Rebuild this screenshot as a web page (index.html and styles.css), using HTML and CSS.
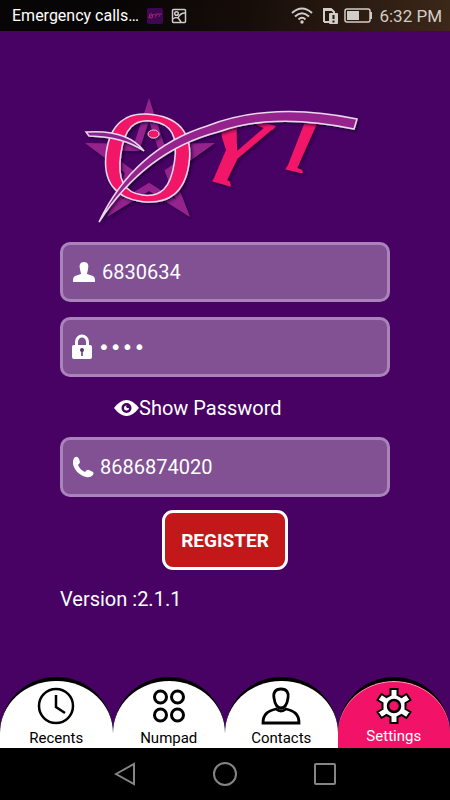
FILE: index.html
```html
<!DOCTYPE html>
<html lang="en">
  <head>
    <meta charset="utf-8">
    <meta name="viewport" content="width=device-width, initial-scale=1">
    <title>OYT Settings</title>
    <link rel="stylesheet" href="styles.css">
  </head>
  <body>
    <header class="status-bar">
      <span class="carrier">Emergency calls…</span>
      <svg class="app-badge" width="16" height="16" viewBox="0 0 16 16">
        <rect width="16" height="16" rx="2" fill="#3d0752"/>
        <ellipse cx="4" cy="8" rx="1.7" ry="2.2" fill="none" stroke="#b0256f"/>
        <path d="M1 10Q6 5 15 6M8 6.500l1 1.500 2-2M9 8l-1 2M13 6l-1 3" fill="none" stroke="#9c2672" stroke-width=".8"/>
      </svg>
      <svg width="16" height="16" viewBox="0 0 16 16" fill="none" stroke="#cfccca" stroke-width="1.500">
        <rect x="1.500" y="1.500" width="13" height="13" rx="1"/>
        <circle cx="5.500" cy="5.500" r="1.800"/>
        <path d="M2 11q3-3 6 0l2 3M7 10q2-5 7-5"/>
      </svg>
      <div class="status-right">
        <svg width="22" height="17" viewBox="0 0 22 17" fill="none" stroke="#d3cdc8" stroke-width="2">
          <path d="M1 6Q11-3 21 6M4 9.500Q11 3 18 9.500M7.500 12.500Q11 9 14.500 12.500"/>
          <circle cx="11" cy="15" r="1.700" fill="#d3cdc8" stroke="none"/>
        </svg>
        <svg width="15" height="17" viewBox="0 0 15 17">
          <path d="M1 15V2h7l3 3v2M1 15h6" fill="none" stroke="#d3cdc8" stroke-width="2"/>
          <path d="M1 1h7l3 3H1z" fill="#d3cdc8"/>
          <rect x="6" y="6" width="9" height="11" rx="1" fill="#d3cdc8"/>
          <path d="M10.500 8v4M10.500 13.500v2" stroke="#211710" stroke-width="2"/>
        </svg>
        <svg width="29" height="15" viewBox="0 0 29 15">
          <rect x="1" y="1" width="25" height="13" rx="2" fill="none" stroke="#d3cdc8" stroke-width="1.500"/>
          <rect x="3" y="3" width="12" height="9" fill="#d3cdc8"/>
          <path d="M27 4v7" stroke="#d3cdc8" stroke-width="2"/>
        </svg>
        <span class="time">6:32 PM</span>
      </div>
    </header>

    <main class="content">
      <svg class="logo" width="290" height="140" viewBox="80 90 290 140" role="img" aria-label="OYT">
        <defs>
          <clipPath id="star-clip">
            <path d="M149 98l15 46 51-1-42 30 17 44-41-26-42 26 18-44-40-30 49 1z"/>
          </clipPath>
          <!-- the swoosh is the top of both letters, so they start below it -->
          <clipPath id="y-clip">
            <path d="M219 128L278 117V124L250 154 230 182 231 187 209 187 214 178 226 150z"/>
          </clipPath>
          <clipPath id="t-clip">
            <path d="M306 119H324L301 166 303 173 283 173 288 165z"/>
          </clipPath>
          <filter id="shadow" x="-20%" y="-20%" width="150%" height="150%">
            <feDropShadow dx="2" dy="2" stdDeviation="1.500" flood-color="#1c0030" flood-opacity=".7"/>
          </filter>
        </defs>
        <g filter="url(#shadow)">
          <path clip-path="url(#star-clip)" d="M149 98l15 46 51-1-42 30 17 44-41-26-42 26 18-44-40-30 49 1z" fill="none" stroke="#96248d" stroke-width="14"/>
        </g>
        <g filter="url(#shadow)">
          <g clip-path="url(#y-clip)">
            <text class="logo-letter" x="0" y="0" font-size="108" transform="translate(190 175) rotate(16)">Y</text>
          </g>
          <g clip-path="url(#t-clip)">
            <text class="logo-letter" x="0" y="0" font-size="86" transform="translate(268 165) rotate(14)">T</text>
          </g>
        </g>
        <g filter="url(#shadow)">
          <text class="logo-letter logo-o" x="0" y="0" font-size="128" transform="translate(96 193) rotate(8)">O</text>
          <ellipse cx="153.500" cy="134" rx="5.500" ry="4" fill="#f21368" stroke="#e6d5ea"/>
          <path d="M86 132Q127 129 144 151Q124 137 89 136z" fill="#8c2492" stroke="#ead9ed" stroke-width="1.500"/>
          <path d="M99 222Q134 149 207 126Q271 101 357 119L354 129Q273 112 218 132Q145 151 99 222z" fill="#96248d" stroke="#ead9ed" stroke-width="1.500"/>
        </g>
      </svg>

      <form class="register-form">
        <label class="field">
          <svg width="24" height="22" viewBox="0 0 24 22" fill="#fff">
            <path d="M12 1c4 0 5 3 4 7 0 2-1 3-1 5l6 2c2 1 2 3 2 6H1c0-3 0-5 2-6l6-2c0-2-1-3-1-5-1-4 0-7 4-7z"/>
          </svg>
          <input type="text" value="6830634" aria-label="User name">
        </label>
        <label class="field">
          <svg width="20" height="26" viewBox="1 0 20 26">
            <path d="M5.500 12V8a5.500 6 0 0 1 11 0v4" fill="none" stroke="#fff" stroke-width="3"/>
            <rect x="1" y="11" width="20" height="14" rx="2" fill="#fff"/>
            <circle cx="11" cy="16" r="2" fill="#5b3473"/>
            <path d="M11 16v6" stroke="#5b3473" stroke-width="1.500"/>
          </svg>
          <input class="password" type="password" value="1234" aria-label="Password">
        </label>
        <button class="show-password" type="button">
          <svg width="25" height="18" viewBox="0 0 25 18">
            <path d="M0 9Q12.500-7 25 9Q12.500 25 0 9z" fill="#fff"/>
            <circle cx="12.500" cy="9" r="5" fill="#480264"/>
            <circle cx="12.500" cy="9" r="2.500" fill="#fff"/>
            <circle cx="14" cy="7.500" r="1.800" fill="#480264"/>
          </svg>
          <span>Show Password</span>
        </button>
        <label class="field">
          <svg width="22" height="22" viewBox="0 0 22 22" fill="#fff">
            <path d="M2 2q3-3 5 1l1 3q0 1-2 3 2 5 7 7 2-3 4-2l4 2q1 1 0 3-3 3-7 2C6 19-2 10 2 2z"/>
          </svg>
          <input type="tel" value="8686874020" aria-label="Phone number">
        </label>
        <button class="register" type="submit">REGISTER</button>
      </form>
      <p class="version">Version :2.1.1</p>
    </main>

    <nav class="tabs">
      <a class="tab" href="#recents">
        <svg width="38" height="38" viewBox="0 0 38 38" fill="none" stroke="#000" stroke-width="2.500">
          <circle cx="19" cy="19" r="17"/>
          <path d="M19 8v12l9 6"/>
        </svg>
        <span>Recents</span>
      </a>
      <a class="tab" href="#numpad">
        <svg width="38" height="38" viewBox="0 0 38 38" fill="none" stroke="#000" stroke-width="3">
          <circle cx="10.500" cy="10" r="6"/>
          <circle cx="27.500" cy="10" r="6"/>
          <circle cx="10.500" cy="28" r="6"/>
          <circle cx="27.500" cy="28" r="6"/>
        </svg>
        <span>Numpad</span>
      </a>
      <a class="tab" href="#contacts">
        <svg width="40" height="38" viewBox="0 0 40 38" fill="none" stroke="#000" stroke-width="2.800">
          <path d="M20 2c6 0 8 4 7 9-1 7-4 10-7 10s-6-3-7-10c-1-5 1-9 7-9z"/>
          <path d="M15 22q5 4 10 0c8 2 13 5 13 14H2c0-9 5-12 13-14z"/>
        </svg>
        <span>Contacts</span>
      </a>
      <a class="tab active" href="#settings">
        <svg width="38" height="38" viewBox="0 0 38 38" fill="#fff" stroke="#000" stroke-width="2">
          <path d="M15.500 2h7v6l4 2 5-3 4 6-5 3v6l5 3-4 6-5-3-4 2v6h-7v-6l-4-2-5 3-4-6 5-3v-6l-5-3 4-6 5 3 4-2z"/>
          <circle cx="19" cy="19" r="6" fill="#f21368" stroke-width="2.500"/>
        </svg>
        <span>Settings</span>
      </a>
    </nav>

    <footer class="nav-bar">
      <button type="button" aria-label="Back">
        <svg width="24" height="24" viewBox="0 0 24 24"><path d="M3 12L21 2v20z"/></svg>
      </button>
      <button type="button" aria-label="Home">
        <svg width="24" height="24" viewBox="0 0 24 24"><circle cx="12" cy="12" r="11"/></svg>
      </button>
      <button type="button" aria-label="Overview">
        <svg width="24" height="24" viewBox="0 0 24 24"><rect x="2" y="2" width="20" height="20" rx="1"/></svg>
      </button>
    </footer>
  </body>
</html>
```
FILE: styles.css
```css
* {
  box-sizing: border-box;
}

body {
  margin: 0;
  min-height: 100vh;
  display: flex;
  flex-direction: column;
  background-color: #480264;
  color: #fff;
  font-family: Roboto, sans-serif;
  font-size: 20px;
}

svg {
  display: block;
  flex: none;
}

button {
  padding: 0;
  border: none;
  background: none;
  color: #fff;
  font-family: inherit;
  font-size: 20px;
  cursor: pointer;
}

.status-bar {
  display: flex;
  align-items: center;
  gap: 8px;
  height: 31px;
  padding: 0 8px 0 12px;
  background: linear-gradient(100deg, #070505 25%, #160d09 55%, #3d2819);
  font-size: 16px;
}

.status-right {
  display: flex;
  align-items: center;
  gap: 6px;
  margin-left: auto;
  color: #d3cdc8;
}

.status-right svg:first-child {
  margin-right: 4px;
}

.time {
  font-size: 17px;
}

.content {
  flex: 1;
  display: flex;
  flex-direction: column;
  padding: 59px 60px 0;
}

.logo {
  margin: 0 20px 12px;
  overflow: visible;
}

.logo-letter {
  font-family: "Liberation Serif", serif;
  font-style: italic;
  font-weight: bold;
  fill: #f21368;
}

.logo-o {
  font-style: normal;
  font-weight: normal;
  stroke: #ead9ed;
  stroke-width: 3px;
  paint-order: stroke;
}

.register-form {
  display: flex;
  flex-direction: column;
}

.field {
  display: flex;
  align-items: center;
  gap: 6px;
  height: 60px;
  margin-bottom: 15px;
  padding: 0 9px;
  background-color: #815194;
  border: 3px solid #a983ba;
  border-radius: 10px;
}

.field input {
  flex: 1;
  min-width: 0;
  padding: 0;
  border: none;
  outline: none;
  background: none;
  color: #fff;
  font-family: inherit;
  font-size: 20px;
}

.field .password {
  font-family: "DejaVu Sans", sans-serif;
}

.show-password {
  display: flex;
  align-items: center;
  align-self: flex-start;
  height: 30px;
  margin: 1px 0 14px 54px;
}

.register {
  align-self: center;
  width: 126px;
  height: 60px;
  margin-top: -2px;
  background-color: #c41719;
  border: 3px solid #fff;
  border-radius: 11px;
  font-size: 19px;
  font-weight: bold;
}

.version {
  margin: 17px 0;
}

.tabs {
  display: flex;
}

.tab {
  flex: 1;
  display: flex;
  flex-direction: column;
  align-items: center;
  gap: 4px;
  height: 71px;
  padding-top: 6px;
  background-color: #fff;
  border-top: 4px solid #000;
  border-radius: 56px 56px 0 0;
  color: #000;
  font-size: 15px;
  text-decoration: none;
}

.tab.active {
  gap: 2px;
  background-color: #f21368;
  box-shadow: inset 0 1px #f7a3c3;
  color: #fff;
}

.nav-bar {
  display: flex;
  justify-content: center;
  gap: 76px;
  height: 52px;
  background-color: #000;
}

.nav-bar svg {
  fill: none;
  stroke: #858585;
  stroke-width: 2px;
}
```
